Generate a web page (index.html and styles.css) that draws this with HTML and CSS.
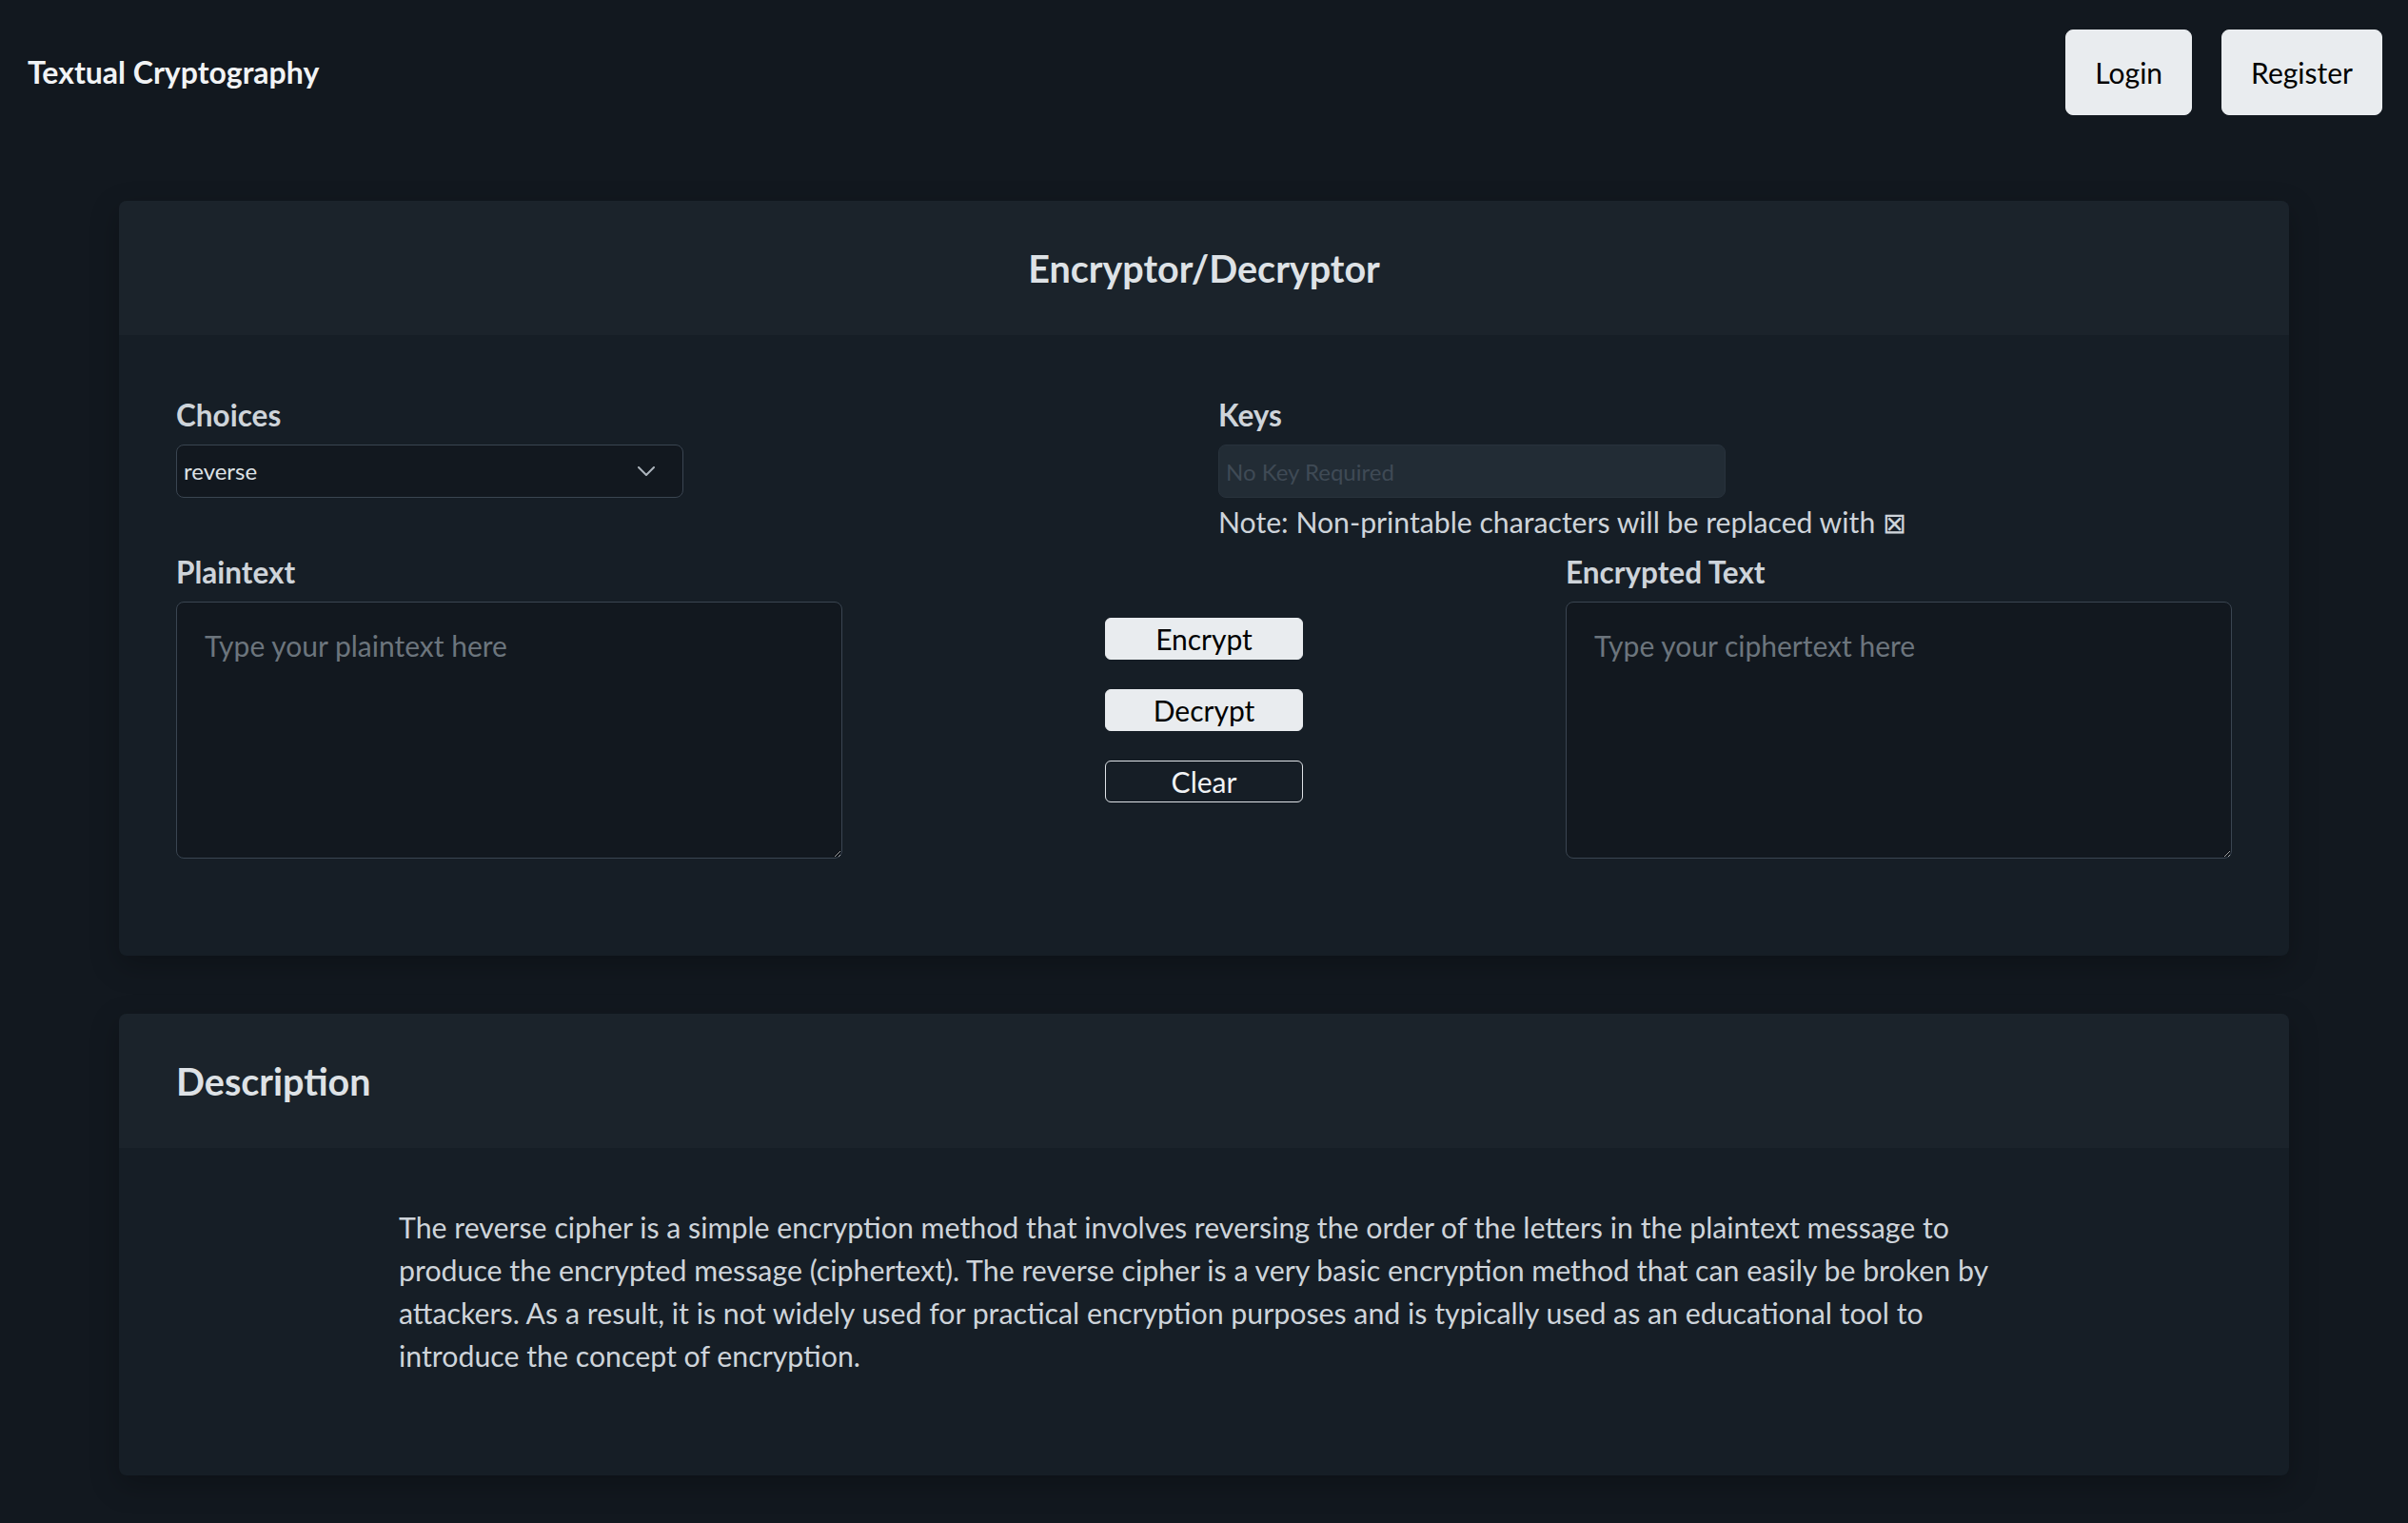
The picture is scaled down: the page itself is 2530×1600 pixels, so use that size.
FILE: index.html
```html
<!DOCTYPE html>
<html lang="en">
<head>
<meta charset="utf-8">
<title>Textual Cryptography</title>
<link rel="stylesheet" href="styles.css">
</head>
<body>
<nav class="navbar">
  <div class="brand">Textual Cryptography</div>
  <div class="nav-actions">
    <button class="nav-btn">Login</button>
    <button class="nav-btn">Register</button>
  </div>
</nav>
<main class="container">
  <section class="card">
    <header class="card-header center">
      <h1 class="card-title">Encryptor/Decryptor</h1>
    </header>
    <div class="card-body tool-body">
      <div class="settings-row">
        <div class="field">
          <label class="label">Choices</label>
          <div class="select">
            <span>reverse</span>
            <svg class="chevron" viewBox="0 0 18 10" width="18" height="10"><path d="M1 1l8 8 8-8" fill="none" stroke="#adb5bd" stroke-width="2" stroke-linecap="round" stroke-linejoin="round"/></svg>
          </div>
        </div>
        <div class="field">
          <label class="label">Keys</label>
          <input class="key-input" type="text" placeholder="No Key Required" disabled>
          <p class="note">Note: Non-printable characters will be replaced with &#x22A0;</p>
        </div>
      </div>
      <div class="text-row">
        <div class="field">
          <label class="label">Plaintext</label>
          <textarea class="textbox" placeholder="Type your plaintext here"></textarea>
        </div>
        <div class="actions">
          <button class="act-btn solid">Encrypt</button>
          <button class="act-btn solid">Decrypt</button>
          <button class="act-btn outline">Clear</button>
        </div>
        <div class="field">
          <label class="label">Encrypted Text</label>
          <textarea class="textbox" placeholder="Type your ciphertext here"></textarea>
        </div>
      </div>
    </div>
  </section>
  <section class="card">
    <header class="card-header">
      <h2 class="card-title">Description</h2>
    </header>
    <div class="card-body desc-body">
      <p class="desc">The reverse cipher is a simple encryption method that involves reversing the order of the letters in the plaintext message to produce the encrypted message (ciphertext). The reverse cipher is a very basic encryption method that can easily be broken by attackers. As a result, it is not widely used for practical encryption purposes and is typically used as an educational tool to introduce the concept of encryption.</p>
    </div>
  </section>
</main>
</body>
</html>
```
FILE: styles.css
```css
* { box-sizing: border-box; }
html, body { margin: 0; padding: 0; }
body {
  background: #12181f;
  color: #ced4da;
  font-family: "Lato", "Open Sans", sans-serif;
  font-size: 30px;
  line-height: 1.5;
  height: 1600px;
  overflow: hidden;
}
.navbar {
  display: flex;
  justify-content: space-between;
  align-items: center;
  padding: 31px 27px 0 29px;
  height: 121px;
}
.brand {
  color: #f1f3f5;
  font-weight: 700;
  font-size: 32px;
}
.nav-actions { display: flex; gap: 31px; }
.nav-btn {
  font-family: inherit;
  font-size: 30px;
  line-height: 45px;
  height: 90px;
  padding: 0 30px;
  background: #e9ecef;
  color: #000;
  border: 1px solid #e9ecef;
  border-radius: 8px;
}
.container {
  width: 2280px;
  margin: 90px auto 0;
  display: flex;
  flex-direction: column;
  gap: 61px;
}
.card {
  background: #161e26;
  border-radius: 8px;
  overflow: hidden;
  box-shadow: 0 10px 30px rgba(0,0,0,0.25);
}
.card-header {
  background: #1b232b;
  height: 141px;
  display: flex;
  align-items: center;
  padding: 0 60px;
}
.card-header.center { justify-content: center; }
.card-title {
  margin: 0;
  font-size: 39.5px;
  font-weight: 700;
  color: #dee2e6;
  line-height: 1.2;
}
.tool-body { padding: 62px 60px 102px; }
.settings-row {
  display: grid;
  grid-template-columns: 1fr 1fr;
  column-gap: 30px;
}
.field { display: flex; flex-direction: column; }
.label {
  font-weight: 700;
  font-size: 31.5px;
  color: #ced4da;
  line-height: 45px;
  margin-bottom: 8px;
}
.select {
  width: 533px;
  height: 56px;
  background: #12181f;
  border: 1px solid #3a4551;
  border-radius: 8px;
  display: flex;
  align-items: center;
  justify-content: space-between;
  padding: 0 29px 0 7px;
  font-size: 24px;
  color: #dee2e6;
}
.key-input {
  width: 533px;
  height: 56px;
  background: #222c35;
  border: 1px solid #28323c;
  border-radius: 8px;
  padding: 0 7px;
  font-family: inherit;
  font-size: 24px;
  color: #dee2e6;
}
.key-input::placeholder { color: #3f4a55; }
.note {
  margin: 3px 0 0;
  line-height: 45px;
  font-size: 30.2px;
  color: #ced4da;
}
.text-row {
  display: grid;
  grid-template-columns: 700px 1fr 700px;
  margin-top: 8px;
}
.textbox {
  height: 270px;
  background: #12181f;
  border: 1px solid #3a4551;
  border-radius: 8px;
  padding: 23px 29px;
  font-family: inherit;
  font-size: 30px;
  line-height: 45px;
  color: #dee2e6;
  resize: vertical;
}
.textbox::placeholder { color: #6c757d; }
.actions {
  display: flex;
  flex-direction: column;
  align-items: center;
  gap: 31px;
  padding-top: 70px;
}
.act-btn {
  width: 208px;
  height: 44px;
  padding: 0;
  font-family: inherit;
  font-size: 30px;
  line-height: 40px;
  border-radius: 6px;
}
.act-btn.solid { background: #e9ecef; border: 1px solid #e9ecef; color: #000; }
.act-btn.outline { background: transparent; border: 1px solid #dee2e6; color: #f1f3f5; }
.desc-body { padding: 61px 60px 103px; }
.desc {
  width: 1692px;
  margin: 0 auto;
  font-size: 30.3px;
  line-height: 45px;
  color: #ced4da;
}
```
